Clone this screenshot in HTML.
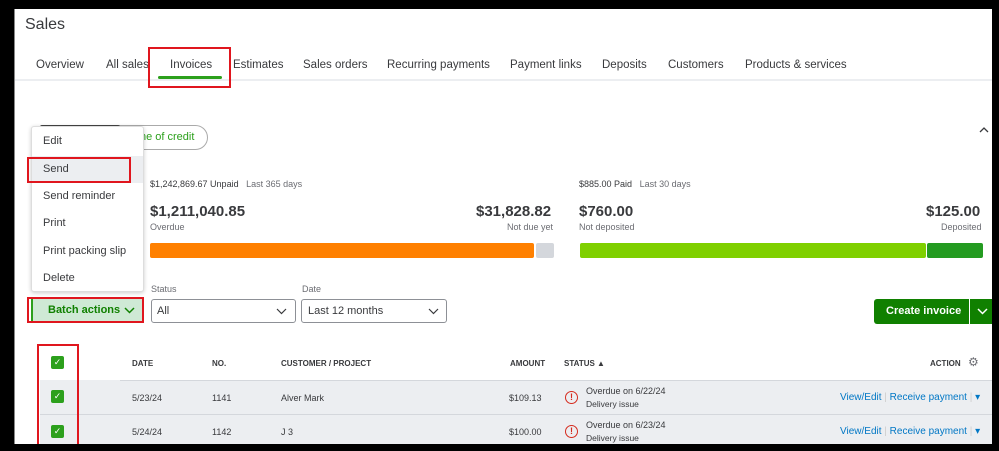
<!DOCTYPE html>
<html><head><style>
*{margin:0;padding:0;box-sizing:border-box}
body{width:999px;height:451px;background:#000;font-family:"Liberation Sans",sans-serif;color:#393a3d;position:relative;overflow:hidden}
.a{position:absolute;white-space:nowrap}
.page{position:absolute;left:14px;top:9px;width:978px;height:435px;background:#fff;border-left:1px solid #888}
.tab{font-size:11.5px;color:#393a3d;top:59px}
.red{position:absolute;border:2px solid #e0161e}
.s11{font-size:9px;color:#393a3d}
.big{font-size:15px;font-weight:bold;color:#393a3d}
.sm{font-size:9px;color:#6b6c72}
.cb{position:absolute;width:13px;height:13px;background:#2ca01c;border-radius:2px;color:#fff;font-size:9px;text-align:center;line-height:13px}
.th{font-size:8px;font-weight:bold;top:359px;color:#393a3d}
.td{font-size:9px;color:#393a3d}
.lnk{font-size:10px;color:#0077c5}
.warn{position:absolute;width:13px;height:13px;border:1.5px solid #d52b1e;border-radius:50%;color:#d52b1e;font-size:9px;font-weight:bold;text-align:center;line-height:10px}
svg.ch{position:absolute}
</style></head><body>
<div class="page"></div>
<div class="a" style="left:25px;top:16px;font-size:16px;color:#393a3d">Sales</div>
<div class="a tab" style="left:36px">Overview</div>
<div class="a tab" style="left:106px">All sales</div>
<div class="a tab" style="left:170px">Invoices</div>
<div class="a tab" style="left:233px">Estimates</div>
<div class="a tab" style="left:303px">Sales orders</div>
<div class="a tab" style="left:387px">Recurring payments</div>
<div class="a tab" style="left:510px">Payment links</div>
<div class="a tab" style="left:602px">Deposits</div>
<div class="a tab" style="left:668px">Customers</div>
<div class="a tab" style="left:745px">Products &amp; services</div>
<div class="a" style="left:15px;top:79px;width:977px;height:2px;background:#eceef1"></div>
<div class="a" style="left:158px;top:76px;width:64px;height:3px;background:#2ca01c;border-radius:2px"></div>
<div class="red" style="left:148px;top:47px;width:83px;height:41px"></div>
<svg class="ch" style="left:979px;top:126px" width="10" height="7"><path d="M1 6 L5 2 L9 6" fill="none" stroke="#393a3d" stroke-width="1.3"/></svg>

<div class="a" style="left:40px;top:125px;width:168px;height:25px;border:1px solid #aaa;border-radius:13px"></div>
<div class="a" style="left:40px;top:125px;width:80px;height:4px;background:#444;border-radius:3px"></div>
<div class="a" style="left:140px;top:131px;font-size:11px;color:#2ca01c">ne of credit</div>

<div class="a s11" style="left:150px;top:179px">$1,242,869.67 Unpaid &nbsp; <span style="color:#6b6c72">Last 365 days</span></div>
<div class="a big" style="left:150px;top:203px">$1,211,040.85</div>
<div class="a sm" style="left:150px;top:222px">Overdue</div>
<div class="a big" style="left:476px;top:203px">$31,828.82</div>
<div class="a sm" style="left:507px;top:222px">Not due yet</div>
<div class="a" style="left:150px;top:243px;width:384px;height:15px;background:#ff8000;border-radius:2px"></div>
<div class="a" style="left:536px;top:243px;width:18px;height:15px;background:#d4d7dc;border-radius:2px"></div>

<div class="a s11" style="left:579px;top:179px">$885.00 Paid &nbsp; <span style="color:#6b6c72">Last 30 days</span></div>
<div class="a big" style="left:579px;top:203px">$760.00</div>
<div class="a sm" style="left:579px;top:222px">Not deposited</div>
<div class="a big" style="left:926px;top:203px">$125.00</div>
<div class="a sm" style="left:941px;top:222px">Deposited</div>
<div class="a" style="left:580px;top:243px;width:346px;height:15px;background:#7fd000;border-radius:2px"></div>
<div class="a" style="left:927px;top:243px;width:56px;height:15px;background:#249b21;border-radius:2px"></div>

<div class="a" style="left:31px;top:126px;width:113px;height:166px;background:#fff;border:1px solid #ddd;border-radius:3px;box-shadow:0 1px 4px rgba(0,0,0,.2)"></div>
<div class="a" style="left:32px;top:156px;width:111px;height:27px;background:#eceef1"></div>
<div class="a" style="left:43px;top:135px;font-size:11px">Edit</div>
<div class="a" style="left:43px;top:163px;font-size:11px">Send</div>
<div class="a" style="left:43px;top:190px;font-size:11px">Send reminder</div>
<div class="a" style="left:43px;top:217px;font-size:11px">Print</div>
<div class="a" style="left:43px;top:245px;font-size:11px">Print packing slip</div>
<div class="a" style="left:43px;top:272px;font-size:11px">Delete</div>
<div class="red" style="left:27px;top:157px;width:104px;height:26px"></div>

<div class="a" style="left:31px;top:298px;width:113px;height:24px;background:#cfe9d5;border-left:2px solid #2ca01c"></div>
<div class="a" style="left:48px;top:304px;font-size:11px;font-weight:bold;color:#108000">Batch actions</div>
<svg class="ch" style="left:124px;top:307px" width="11" height="7"><path d="M1 1 L5.5 5.5 L10 1" fill="none" stroke="#108000" stroke-width="1.5"/></svg>
<div class="red" style="left:27px;top:297px;width:117px;height:26px"></div>
<div class="a sm" style="left:151px;top:284px">Status</div>
<div class="a" style="left:151px;top:299px;width:145px;height:24px;border:1px solid #8d9096;border-radius:3px"></div>
<div class="a" style="left:157px;top:305px;font-size:11px">All</div>
<svg class="ch" style="left:276px;top:308px" width="11" height="7"><path d="M1 1 L5.5 5.5 L10 1" fill="none" stroke="#393a3d" stroke-width="1.2"/></svg>
<div class="a sm" style="left:302px;top:284px">Date</div>
<div class="a" style="left:301px;top:299px;width:146px;height:24px;border:1px solid #8d9096;border-radius:3px"></div>
<div class="a" style="left:308px;top:305px;font-size:11px">Last 12 months</div>
<svg class="ch" style="left:428px;top:308px" width="11" height="7"><path d="M1 1 L5.5 5.5 L10 1" fill="none" stroke="#393a3d" stroke-width="1.2"/></svg>

<div class="a" style="left:874px;top:299px;width:95px;height:25px;background:#108000;border-radius:3px 0 0 3px"></div>
<div class="a" style="left:886px;top:305px;font-size:11px;font-weight:bold;color:#fff">Create invoice</div>
<div class="a" style="left:970px;top:299px;width:22px;height:25px;background:#108000"></div>
<svg class="ch" style="left:977px;top:308px" width="11" height="7"><path d="M1 1 L5.5 5.5 L10 1" fill="none" stroke="#fff" stroke-width="1.5"/></svg>

<div class="a" style="left:40px;top:380px;width:952px;height:64px;background:#eceef1"></div>
<div class="a" style="left:40px;top:414px;width:952px;height:1px;background:#d4d7dc"></div>
<div class="a" style="left:120px;top:380px;width:872px;height:1px;background:#d4d7dc"></div>

<div class="a th" style="left:132px">DATE</div>
<div class="a th" style="left:212px">NO.</div>
<div class="a th" style="left:281px">CUSTOMER / PROJECT</div>
<div class="a th" style="left:510px">AMOUNT</div>
<div class="a th" style="left:564px">STATUS ▲</div>
<div class="a th" style="left:930px">ACTION</div>
<div class="a" style="left:968px;top:355px;font-size:12px;color:#6b6c72">⚙</div>

<div class="cb" style="left:51px;top:356px">✓</div>
<div class="cb" style="left:51px;top:390px">✓</div>
<div class="cb" style="left:51px;top:425px">✓</div>
<div class="red" style="left:37px;top:344px;width:42px;height:100px;border-bottom:none"></div>

<div class="a td" style="left:132px;top:393px">5/23/24</div>
<div class="a td" style="left:212px;top:393px">1141</div>
<div class="a td" style="left:281px;top:393px">Alver Mark</div>
<div class="a td" style="left:509px;top:393px">$109.13</div>
<div class="warn" style="left:565px;top:391px">!</div>
<div class="a td" style="left:586px;top:386px">Overdue on 6/22/24</div>
<div class="a td" style="left:586px;top:399px;font-size:8.5px">Delivery issue</div>
<div class="a lnk" style="left:840px;top:392px">View/Edit <span style="color:#ccc">|</span> Receive payment <span style="color:#ccc">|</span> ▾</div>

<div class="a td" style="left:132px;top:427px">5/24/24</div>
<div class="a td" style="left:212px;top:427px">1142</div>
<div class="a td" style="left:281px;top:427px">J 3</div>
<div class="a td" style="left:509px;top:427px">$100.00</div>
<div class="warn" style="left:565px;top:425px">!</div>
<div class="a td" style="left:586px;top:420px">Overdue on 6/23/24</div>
<div class="a td" style="left:586px;top:433px;font-size:8.5px">Delivery issue</div>
<div class="a lnk" style="left:840px;top:426px">View/Edit <span style="color:#ccc">|</span> Receive payment <span style="color:#ccc">|</span> ▾</div>
<div class="a" style="left:0;top:444px;width:999px;height:7px;background:#000"></div>
</body></html>
